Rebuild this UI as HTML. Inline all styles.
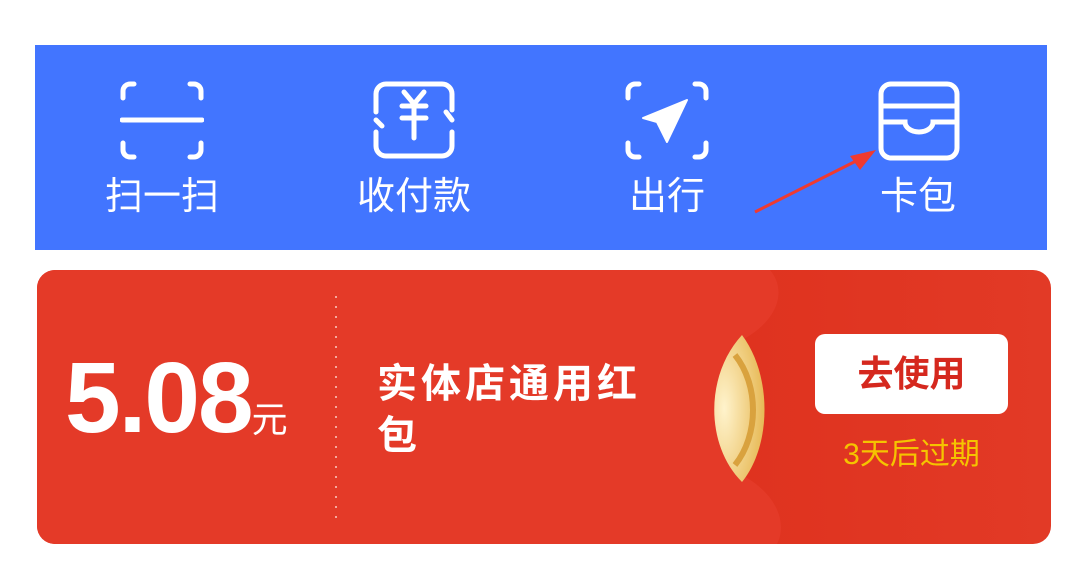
<!DOCTYPE html>
<html><head><meta charset="utf-8"><style>
body{margin:0;width:1080px;height:565px;background:#fff;position:relative;overflow:hidden;font-family:"Liberation Sans","Noto Sans CJK SC",sans-serif}
.blue{position:absolute;left:35px;top:45px;width:1012px;height:205px;background:#4275FF}
.lab{position:absolute;top:170px;color:#fff;font-size:38px;width:200px;text-align:center;line-height:54px}
.ic{position:absolute;top:80px}
.card{position:absolute;left:37px;top:270px;width:1014px;height:274px;border-radius:18px;overflow:hidden;background:linear-gradient(90deg,#D8220F,#E23A26)}
</style></head><body>
<div class="blue"></div>
<svg class="ic" style="left:120px" width="84" height="82" viewBox="0 0 84 82" fill="none" stroke="#fff" stroke-width="5" stroke-linecap="round">
<path d="M14 4H10a7 7 0 0 0-7 7v7M70 4h4a7 7 0 0 1 7 7v7M14 77H10a7 7 0 0 1-7-7v-7M70 77h4a7 7 0 0 0 7-7v-7M2 40h80"/></svg>
<svg class="ic" style="left:372px" width="84" height="82" viewBox="0 0 84 82" fill="none" stroke="#fff" stroke-width="5" stroke-linecap="round">
<path d="M4 32V14a10 10 0 0 1 10-10h56a10 10 0 0 1 10 10v16M80 52v14a10 10 0 0 1-10 10H14A10 10 0 0 1 4 66V52"/>
<path d="M80 40l-6-8M4 40l6 6M32 12l10 12l10-12M30 26h24M30 38h24M42 24v34"/></svg>
<svg class="ic" style="left:625px" width="84" height="82" viewBox="0 0 84 82" fill="none" stroke="#fff" stroke-width="5" stroke-linecap="round">
<path d="M14 4H10a7 7 0 0 0-7 7v7M70 4h4a7 7 0 0 1 7 7v7M14 77H10a7 7 0 0 1-7-7v-7M70 77h4a7 7 0 0 0 7-7v-7"/>
<path d="M62 20L18 38l14 4l10 20z" fill="#fff" stroke-width="2" stroke-linejoin="round"/></svg>
<svg class="ic" style="left:877px" width="84" height="82" viewBox="0 0 84 82" fill="none" stroke="#fff" stroke-width="5" stroke-linecap="round">
<rect x="4" y="4" width="76" height="74" rx="10"/><path d="M4 26h76M4 42h24a14 10 0 0 0 28 0h24"/></svg>
<svg style="position:absolute;left:750px;top:140px" width="140" height="80"><path d="M5 72L112 18" stroke="#F03A30" stroke-width="3"/><path d="M126 10L100 16L110 30z" fill="#F03A30"/></svg>
<div class="lab" style="left:62px">扫一扫</div>
<div class="lab" style="left:314px">收付款</div>
<div class="lab" style="left:567px">出行</div>
<div class="lab" style="left:818px">卡包</div>
<div class="card">
<svg style="position:absolute;left:0;top:0" width="1014" height="274">
<path d="M0 0H733C750 20 742 50 705 70V205C742 225 750 255 740 274H0z" fill="#E43A28"/>
<path d="M705 65C668 105 668 175 705 212C735 175 735 105 705 65z" fill="url(#g)"/>
<path d="M698 85C722 115 722 165 698 195" stroke="#D9A23E" stroke-width="6" fill="none"/>
<defs><radialGradient id="g" cx="0.2" cy="0.5" r="0.8"><stop offset="0" stop-color="#FFF3CC"/><stop offset="1" stop-color="#E7B955"/></radialGradient></defs>
<line x1="299" y1="26" x2="299" y2="250" stroke="#F5A79C" stroke-width="2" stroke-dasharray="2 8"/>
</svg>
<div style="position:absolute;left:28px;top:78px;color:#fff;font-size:100px;font-weight:bold;line-height:100px;letter-spacing:-2px">5.08<span style="font-size:36px;font-weight:normal;letter-spacing:0">元</span></div>
<div style="position:absolute;left:340px;top:88px;width:280px;color:#fff;font-size:40px;font-weight:bold;line-height:52px;letter-spacing:4px">实体店通用红包</div>
<div style="position:absolute;left:778px;top:64px;width:193px;height:80px;background:#fff;border-radius:10px;color:#D5281E;font-size:36px;font-weight:bold;text-align:center;line-height:80px">去使用</div>
<div style="position:absolute;left:770px;top:166px;width:209px;text-align:center;color:#F5C400;font-size:30px;line-height:38px">3天后过期</div>
</div>
</body></html>
